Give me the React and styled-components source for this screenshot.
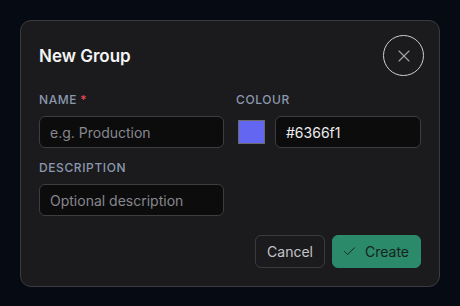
import React from 'react'
import styled, { createGlobalStyle } from 'styled-components'
import { X, Check } from 'lucide-react'

const Global = createGlobalStyle`
  html, body {
    margin: 0;
    background: #060a13;
    font-family: Inter, "Noto Sans", "Liberation Sans", sans-serif;
  }
  * { box-sizing: border-box; }
`

const Page = styled.div`
  padding: 20px;
  height: 306px;
`

const Dialog = styled.div`
  width: 420px;
  background: #1b1b1d;
  border: 1px solid #3b3b3f;
  border-radius: 11px;
  padding: 14px 18px 18px;
`

const Header = styled.div`
  display: flex;
  align-items: center;
  justify-content: space-between;
  height: 41px;
  margin-bottom: 16px;
`

const Title = styled.h2`
  margin: 0;
  color: #f4f4f5;
  font-size: 17px;
  font-weight: 600;
`

const CloseButton = styled.button`
  width: 41px;
  height: 41px;
  margin-right: -3px;
  border-radius: 50%;
  border: 1px solid #cfcfd2;
  background: transparent;
  color: #a4a4ab;
  display: flex;
  align-items: center;
  justify-content: center;
  padding: 0;
`

const Grid = styled.div`
  display: grid;
  grid-template-columns: 1fr 1fr;
  column-gap: 12px;
  row-gap: 12px;
`

const Field = styled.div`
  display: flex;
  flex-direction: column;
  gap: 8px;
`

const Label = styled.label`
  font-size: 12px;
  line-height: 16px;
  font-weight: 450;
  letter-spacing: 0.6px;
  text-transform: uppercase;
  color: #8b98ae;
`

const Required = styled.span`
  color: #e5484d;
  margin-left: 3px;
`

const Input = styled.input`
  width: 100%;
  height: 32px;
  background: #0c0c0d;
  border: 1px solid #3d3d41;
  border-radius: 6px;
  padding: 0 10px;
  font-family: inherit;
  font-size: 14px;
  color: #ececee;
  outline: none;
  &::placeholder { color: #87878d; }
`

const ColourRow = styled.div`
  display: flex;
  align-items: center;
  gap: 10px;
`

const Swatch = styled.div`
  flex: none;
  width: 27px;
  height: 24px;
  margin-left: 2px;
  background: ${p => p.color};
  border: 1px solid #6a6a6e;
`

const Actions = styled.div`
  display: flex;
  justify-content: flex-end;
  gap: 7px;
  margin-top: 19px;
`

const Button = styled.button`
  height: 33px;
  display: flex;
  align-items: center;
  gap: 8px;
  border-radius: 6px;
  font-family: inherit;
  font-size: 14px;
  padding: ${p => (p.primary ? '0 11px 0 9px' : '0 11px')};
  background: ${p => (p.primary ? '#2a8a69' : 'transparent')};
  border: 1px solid ${p => (p.primary ? '#2a8a69' : '#3b3b3f')};
  color: ${p => (p.primary ? '#18221e' : '#c4c4c8')};
`

export default function App() {
  return (
    <Page>
      <Global />
      <Dialog>
        <Header>
          <Title>New Group</Title>
          <CloseButton aria-label="Close">
            <X size={20} strokeWidth={1.3} />
          </CloseButton>
        </Header>
        <Grid>
          <Field>
            <Label>Name<Required>*</Required></Label>
            <Input placeholder="e.g. Production" />
          </Field>
          <Field>
            <Label>Colour</Label>
            <ColourRow>
              <Swatch color="#6366f1" />
              <Input defaultValue="#6366f1" />
            </ColourRow>
          </Field>
          <Field>
            <Label>Description</Label>
            <Input placeholder="Optional description" />
          </Field>
        </Grid>
        <Actions>
          <Button>Cancel</Button>
          <Button primary>
            <Check size={15} strokeWidth={1.6} />
            Create
          </Button>
        </Actions>
      </Dialog>
    </Page>
  )
}
